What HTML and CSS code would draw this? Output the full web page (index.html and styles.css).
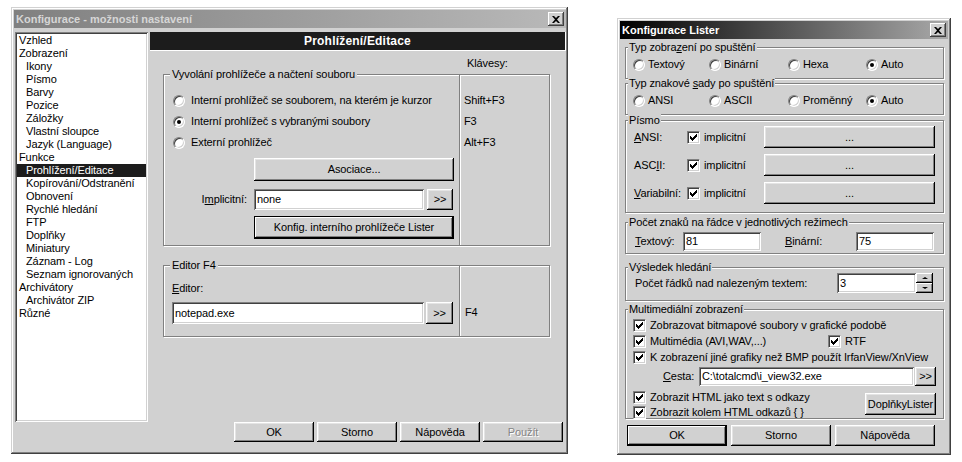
FILE: index.html
```html
<html>
<head>
    <title>Konfigurace</title>
    <link rel="stylesheet" href="styles.css">
</head>
<body>
<div class="desk">

    <!-- hlavni dialog -->
    <div class="window main-win">
        <div class="titlebar inactive">
            <span>Konfigurace - možnosti nastavení</span>
            <button class="close-btn"><svg width="8" height="7" viewBox="0 0 8 7"><path d="M0 0h2l2 2 2-2h2L5 3.5 8 7H6L4 5 2 7H0l3-3.5z"/></svg></button>
        </div>
        <div class="main-body">
            <div class="tree">
                <div class="node">Vzhled</div>
                <div class="node">Zobrazení</div>
                <div class="node sub">Ikony</div>
                <div class="node sub">Písmo</div>
                <div class="node sub">Barvy</div>
                <div class="node sub">Pozice</div>
                <div class="node sub">Záložky</div>
                <div class="node sub">Vlastní sloupce</div>
                <div class="node sub">Jazyk (Language)</div>
                <div class="node">Funkce</div>
                <div class="node sub selected">Prohlížení/Editace</div>
                <div class="node sub">Kopírování/Odstranění</div>
                <div class="node sub">Obnovení</div>
                <div class="node sub">Rychlé hledání</div>
                <div class="node sub">FTP</div>
                <div class="node sub">Doplňky</div>
                <div class="node sub">Miniatury</div>
                <div class="node sub">Záznam - Log</div>
                <div class="node sub">Seznam ignorovaných</div>
                <div class="node">Archivátory</div>
                <div class="node sub">Archivátor ZIP</div>
                <div class="node">Různé</div>
            </div>

            <div class="pane">
                <div class="pane-head">Prohlížení/Editace</div>
                <div class="keys-caption">Klávesy:</div>

                <div class="group view-group">
                    <span class="legend">Vyvolání prohlížeče a načtení souboru</span>
                    <div class="group-main view-main">
                        <div class="opt-row"><span class="radio"></span>Interní prohlížeč se souborem, na kterém je kurzor</div>
                        <div class="opt-row"><span class="radio on"></span>Interní prohlížeč s vybranými soubory</div>
                        <div class="opt-row"><span class="radio"></span>Externí prohlížeč</div>
                        <button class="btn wide-btn assoc-btn">Asociace...</button>
                        <div class="field-row implicit-row">
                            <span class="field-label">I<u>m</u>plicitní:</span>
                            <span class="field implicit-field">none</span>
                            <button class="btn more-btn">&gt;&gt;</button>
                        </div>
                        <button class="btn default-btn wide-btn lister-btn">Konfig. interního prohlížeče Lister</button>
                    </div>
                    <div class="group-keys view-keys">
                        <div class="key-row">Shift+F3</div>
                        <div class="key-row">F3</div>
                        <div class="key-row">Alt+F3</div>
                    </div>
                </div>

                <div class="group edit-group">
                    <span class="legend">Editor F4</span>
                    <div class="group-main edit-main">
                        <div><u>E</u>ditor:</div>
                        <div class="field-row edit-row">
                            <span class="field editor-field">notepad.exe</span>
                            <button class="btn more-btn">&gt;&gt;</button>
                        </div>
                    </div>
                    <div class="group-keys edit-keys">F4</div>
                </div>

                <div class="btn-row main-btns">
                    <button class="btn">OK</button>
                    <button class="btn">Storno</button>
                    <button class="btn">Nápověda</button>
                    <button class="btn disabled">Použít</button>
                </div>
            </div>
        </div>
    </div>

    <!-- dialog listeru -->
    <div class="window lister-win">
        <div class="titlebar active">
            <span>Konfigurace Lister</span>
            <button class="close-btn"><svg width="8" height="7" viewBox="0 0 8 7"><path d="M0 0h2l2 2 2-2h2L5 3.5 8 7H6L4 5 2 7H0l3-3.5z"/></svg></button>
        </div>

        <div class="group lgroup mode-group">
            <span class="legend">Typ zobra<u>z</u>ení po spuštění</span>
            <div class="radio-line">
                <div class="radio-opt"><span class="radio"></span>Textový</div>
                <div class="radio-opt"><span class="radio"></span>Binární</div>
                <div class="radio-opt"><span class="radio"></span>Hexa</div>
                <div class="radio-opt"><span class="radio on"></span>Auto</div>
            </div>
        </div>

        <div class="group lgroup charset-group">
            <span class="legend">Typ znakové <u>s</u>ady po spuštění</span>
            <div class="radio-line">
                <div class="radio-opt"><span class="radio"></span>ANSI</div>
                <div class="radio-opt"><span class="radio"></span>ASCII</div>
                <div class="radio-opt"><span class="radio"></span>Proměnný</div>
                <div class="radio-opt"><span class="radio on"></span>Auto</div>
            </div>
        </div>

        <div class="group lgroup font-group">
            <span class="legend">Písmo</span>
            <div class="font-row">
                <span class="font-label"><u>A</u>NSI:</span>
                <span class="check-opt font-check"><span class="check"><svg width="7" height="7" viewBox="0 0 7 7"><path d="M0 2h1v1h1v1h1v-1h1v-1h1v-1h1v-1h1v3h-1v1h-1v1h-1v1h-1v1h-1v-1h-1v-1h-1z"/></svg></span>implicitní</span>
                <button class="btn font-btn">...</button>
            </div>
            <div class="font-row">
                <span class="font-label">ASC<u>I</u>I:</span>
                <span class="check-opt font-check"><span class="check"><svg width="7" height="7" viewBox="0 0 7 7"><path d="M0 2h1v1h1v1h1v-1h1v-1h1v-1h1v-1h1v3h-1v1h-1v1h-1v1h-1v1h-1v-1h-1v-1h-1z"/></svg></span>implicitní</span>
                <button class="btn font-btn">...</button>
            </div>
            <div class="font-row">
                <span class="font-label"><u>V</u>ariabilní:</span>
                <span class="check-opt font-check"><span class="check"><svg width="7" height="7" viewBox="0 0 7 7"><path d="M0 2h1v1h1v1h1v-1h1v-1h1v-1h1v-1h1v3h-1v1h-1v1h-1v1h-1v1h-1v-1h-1v-1h-1z"/></svg></span>implicitní</span>
                <button class="btn font-btn">...</button>
            </div>
        </div>

        <div class="group lgroup width-group">
            <span class="legend">Počet znaků na řádce v jednotlivých režimech</span>
            <div class="width-row">
                <span class="text-label"><u>T</u>extový:</span>
                <span class="field small-field">81</span>
                <span class="bin-label"><u>B</u>inární:</span>
                <span class="field small-field">75</span>
            </div>
        </div>

        <div class="group lgroup search-group">
            <span class="legend">Výsledek hledání</span>
            <div class="search-row">
                <span class="search-label">Počet řádků nad nalezeným textem:</span>
                <span class="field lines-field">3</span>
                <span class="spinner"><button class="spin-btn up"></button><button class="spin-btn down"></button></span>
            </div>
        </div>

        <div class="group lgroup media-group">
            <span class="legend">Multimediální zobrazení</span>
            <div class="check-row"><span class="check-opt"><span class="check"><svg width="7" height="7" viewBox="0 0 7 7"><path d="M0 2h1v1h1v1h1v-1h1v-1h1v-1h1v-1h1v3h-1v1h-1v1h-1v1h-1v1h-1v-1h-1v-1h-1z"/></svg></span>Zobrazovat bitmapové soubory v grafické podobě</span></div>
            <div class="check-row">
                <span class="check-opt multi-opt"><span class="check"><svg width="7" height="7" viewBox="0 0 7 7"><path d="M0 2h1v1h1v1h1v-1h1v-1h1v-1h1v-1h1v3h-1v1h-1v1h-1v1h-1v1h-1v-1h-1v-1h-1z"/></svg></span>Multimédia (AVI,WAV,...)</span>
                <span class="check-opt"><span class="check"><svg width="7" height="7" viewBox="0 0 7 7"><path d="M0 2h1v1h1v1h1v-1h1v-1h1v-1h1v-1h1v3h-1v1h-1v1h-1v1h-1v1h-1v-1h-1v-1h-1z"/></svg></span>RTF</span>
            </div>
            <div class="check-row"><span class="check-opt"><span class="check"><svg width="7" height="7" viewBox="0 0 7 7"><path d="M0 2h1v1h1v1h1v-1h1v-1h1v-1h1v-1h1v3h-1v1h-1v1h-1v1h-1v1h-1v-1h-1v-1h-1z"/></svg></span>K zobrazení jiné grafiky než BMP použít IrfanView/XnView</span></div>
            <div class="path-row">
                <span class="path-label"><u>C</u>esta:</span>
                <span class="field path-field">C:\totalcmd\i_view32.exe</span>
                <button class="btn path-btn">&gt;&gt;</button>
            </div>
            <div class="media-bottom">
                <div class="media-checks">
                    <div class="check-row"><span class="check-opt"><span class="check"><svg width="7" height="7" viewBox="0 0 7 7"><path d="M0 2h1v1h1v1h1v-1h1v-1h1v-1h1v-1h1v3h-1v1h-1v1h-1v1h-1v1h-1v-1h-1v-1h-1z"/></svg></span>Zobrazit HTML jako text s odkazy</span></div>
                    <div class="check-row"><span class="check-opt"><span class="check"><svg width="7" height="7" viewBox="0 0 7 7"><path d="M0 2h1v1h1v1h1v-1h1v-1h1v-1h1v-1h1v3h-1v1h-1v1h-1v1h-1v1h-1v-1h-1v-1h-1z"/></svg></span>Zobrazit kolem HTML odkazů { }</span></div>
                </div>
                <button class="btn plugins-btn">DoplňkyLister</button>
            </div>
        </div>

        <div class="btn-row lister-btns">
            <button class="btn default-btn">OK</button>
            <button class="btn">Storno</button>
            <button class="btn">Nápověda</button>
        </div>
    </div>

</div>
</body>
</html>
```

FILE: styles.css
```css
body{
    margin: 0;
    background: #fff;
    color: #000;
    font: 11px/13px "Liberation Sans", Arial, sans-serif;
    letter-spacing: -0.1px;
}
u{
    text-decoration-thickness: 1px;
    text-underline-offset: 1px;
}
.desk{
    display: flex;
    align-items: flex-start;
    gap: 49px;
    padding: 7px 0 0 11px;
}

/* okna a zakladni prvky */
.window{
    background: #d1d1d1;
    box-sizing: border-box;
    box-shadow: inset -1px -1px #404040, inset 1px 1px #d1d1d1, inset -2px -2px #808080, inset 2px 2px #fff;
}
.titlebar{
    height: 18px;
    display: flex;
    align-items: center;
    justify-content: space-between;
    padding: 0 2px 0 2px;
    font-weight: bold;
    letter-spacing: 0;
}
.titlebar.inactive{
    background: linear-gradient(90deg, #808080, #b9b9b9);
    color: #d6d6d6;
}
.titlebar.active{
    background: linear-gradient(90deg, #000, #a9a9a9);
    color: #fff;
}
button{
    font: inherit;
    letter-spacing: inherit;
    color: inherit;
    border: 0;
    padding: 0;
    margin: 0;
    background: #d1d1d1;
}
.close-btn{
    width: 16px;
    height: 14px;
    display: flex;
    align-items: center;
    justify-content: center;
    box-shadow: inset -1px -1px #404040, inset 1px 1px #fff, inset -2px -2px #808080;
}
.btn{
    box-sizing: border-box;
    display: flex;
    align-items: center;
    justify-content: center;
    box-shadow: inset -1px -1px #000, inset 1px 1px #fff, inset -2px -2px #808080, inset 2px 2px #e4e4e4;
}
.default-btn{
    border: 1px solid #000;
    box-shadow: inset -1px -1px #000, inset 1px 1px #fff, inset -2px -2px #808080;
}
.btn.disabled{
    color: #858585;
    text-shadow: 1px 1px #fff;
}
.field{
    box-sizing: border-box;
    display: flex;
    align-items: center;
    padding-left: 3px;
    background: #fff;
    box-shadow: inset 1px 1px #808080, inset -1px -1px #fff, inset 2px 2px #404040, inset -2px -2px #d1d1d1;
}
.group{
    position: relative;
    box-sizing: border-box;
    border: 1px solid #808080;
    box-shadow: inset 1px 1px #fff, 1px 1px #fff;
}
.legend{
    position: absolute;
    top: -7px;
    left: 6px;
    padding: 0 2px;
    background: #d1d1d1;
    white-space: nowrap;
}
.radio{
    width: 12px;
    height: 12px;
    flex: none;
    box-sizing: border-box;
    border-radius: 50%;
    background: #fff;
    border: 1px solid;
    border-color: #808080 #fff #fff #808080;
    box-shadow: inset 1px 1px #404040, inset -1px -1px #d1d1d1;
    display: flex;
    align-items: center;
    justify-content: center;
}
.radio.on::after{
    content: "";
    width: 4px;
    height: 4px;
    border-radius: 50%;
    background: #000;
}
.check{
    width: 13px;
    height: 13px;
    flex: none;
    box-sizing: border-box;
    background: #fff;
    border: 1px solid;
    border-color: #808080 #fff #fff #808080;
    box-shadow: inset 1px 1px #404040, inset -1px -1px #d1d1d1;
    display: flex;
    align-items: center;
    justify-content: center;
}
.check svg{
    shape-rendering: crispEdges;
}
.check-opt{
    display: flex;
    align-items: center;
    gap: 4px;
    white-space: nowrap;
}
.btn-row{
    display: flex;
    gap: 3px;
}

/* hlavni dialog */
.main-win{
    width: 557px;
    height: 447px;
    padding: 3px 2px 3px 3px;
}
.main-body{
    display: flex;
    align-items: flex-start;
    margin-top: 4px;
}
.tree{
    width: 133px;
    height: 390px;
    margin-left: 1px;
    box-sizing: border-box;
    padding: 2px;
    background: #fff;
    box-shadow: inset 1px 1px #808080, inset -1px -1px #fff, inset 2px 2px #404040, inset -2px -2px #d1d1d1;
}
.node{
    height: 13px;
    padding-left: 2px;
    white-space: nowrap;
}
.node.sub{
    padding-left: 9px;
}
.node.selected{
    background: #1c1c1c;
    color: #fff;
}
.pane{
    width: 416px;
    margin-left: 2px;
}
.pane-head{
    height: 19px;
    box-sizing: border-box;
    background: #1c1c1c;
    color: #fff;
    border-right: 1px solid #fff;
    border-bottom: 1px solid #fff;
    font-weight: bold;
    font-size: 12px;
    line-height: 18px;
    letter-spacing: 0.2px;
    text-align: center;
}
.keys-caption{
    height: 23px;
    box-sizing: border-box;
    padding: 6px 0 0 317px;
}
.view-group, .edit-group{
    display: flex;
    margin-left: 13px;
    width: 387px;
}
.view-group{
    height: 172px;
}
.group-main{
    width: 296px;
    box-sizing: border-box;
    border-right: 1px solid #808080;
}
.group-keys{
    flex: 1;
    border-left: 1px solid #fff;
    padding-left: 3px;
}
.view-main{
    padding: 15px 0 0 9px;
}
.view-keys{
    padding-top: 15px;
}
.opt-row, .key-row{
    height: 21px;
    display: flex;
    align-items: center;
    gap: 6px;
    white-space: nowrap;
}
.wide-btn{
    width: 200px;
    height: 23px;
    margin-left: 81px;
}
.assoc-btn{
    margin-top: 5px;
}
.lister-btn{
    margin-top: 6px;
}
.field-row{
    display: flex;
    align-items: stretch;
}
.implicit-row{
    height: 21px;
    margin-top: 8px;
}
.field-label{
    width: 74px;
    margin-right: 7px;
    text-align: right;
    align-self: center;
}
.implicit-field{
    width: 170px;
}
.more-btn{
    width: 26px;
    margin-left: 3px;
}
.edit-group{
    height: 72px;
    margin-top: 19px;
}
.edit-main{
    padding: 16px 0 0 8px;
}
.edit-row{
    height: 22px;
    margin-top: 7px;
}
.editor-field{
    width: 252px;
}
.edit-row .more-btn{
    width: 27px;
    margin-left: 2px;
}
.edit-keys{
    padding-top: 40px;
    padding-left: 4px;
}
.main-btns{
    justify-content: flex-end;
    margin: 85px 3px 0 0;
}
.main-btns .btn{
    width: 80px;
    height: 20px;
}

/* dialog listeru */
.lister-win{
    width: 334px;
    height: 437px;
    margin-top: 11px;
    padding: 3px;
}
.lgroup{
    width: 319px;
    margin-left: 5px;
}
.lgroup .legend{
    left: 2px;
    padding: 0 1px;
}
.mode-group{
    height: 32px;
    margin-top: 8px;
    padding: 10px 0 0 7px;
}
.charset-group{
    height: 32px;
    margin-top: 4px;
    padding: 10px 0 0 7px;
}
.radio-line{
    display: grid;
    grid-template-columns: 76px 79px 78px auto;
}
.radio-opt{
    height: 13px;
    display: flex;
    align-items: center;
    gap: 3px;
}
.font-group{
    height: 93px;
    margin-top: 5px;
    padding: 5px 0 0 8px;
}
.font-row{
    display: flex;
    align-items: center;
    height: 22px;
    margin-bottom: 6px;
}
.font-label{
    width: 53px;
}
.font-check{
    width: 77px;
}
.font-btn{
    width: 171px;
    height: 22px;
}
.width-group{
    height: 32px;
    margin-top: 9px;
    padding: 9px 0 0 9px;
}
.width-row{
    display: flex;
    align-items: center;
}
.text-label{
    width: 48px;
}
.bin-label{
    width: 71px;
    margin-left: 24px;
}
.small-field{
    width: 78px;
    height: 19px;
}
.search-group{
    height: 34px;
    margin-top: 13px;
    padding: 5px 0 0 9px;
}
.search-row{
    display: flex;
    align-items: center;
}
.search-label{
    width: 202px;
}
.lines-field{
    width: 79px;
    height: 20px;
}
.spinner{
    display: flex;
    flex-direction: column;
}
.spin-btn{
    width: 17px;
    height: 10px;
    display: flex;
    align-items: center;
    justify-content: center;
    box-shadow: inset -1px -1px #000, inset 1px 1px #fff, inset -2px -2px #808080;
}
.spin-btn::after{
    content: "";
    border-left: 3px solid transparent;
    border-right: 3px solid transparent;
}
.spin-btn.up::after{
    border-bottom: 2px solid #000;
}
.spin-btn.down::after{
    border-top: 2px solid #000;
}
.media-group{
    height: 110px;
    margin-top: 8px;
    padding: 7px 0 0 7px;
}
.check-row{
    height: 16px;
    display: flex;
    align-items: center;
}
.multi-opt{
    width: 195px;
}
.path-row{
    display: flex;
    height: 19px;
    margin-top: 2px;
    padding-left: 30px;
}
.path-label{
    width: 36px;
    align-self: center;
}
.path-field{
    width: 215px;
}
.path-btn{
    width: 21px;
    margin-left: 1px;
}
.media-bottom{
    display: flex;
    align-items: flex-start;
    margin-top: 3px;
}
.media-checks{
    width: 232px;
}
.media-checks .check-row:last-child{
    height: 15px;
}
.plugins-btn{
    width: 71px;
    height: 22px;
    margin-top: 4px;
}
.lister-btns{
    margin: 6px 0 0 7px;
    gap: 4px;
}
.lister-btns .btn{
    width: 100px;
    height: 21px;
}
```
